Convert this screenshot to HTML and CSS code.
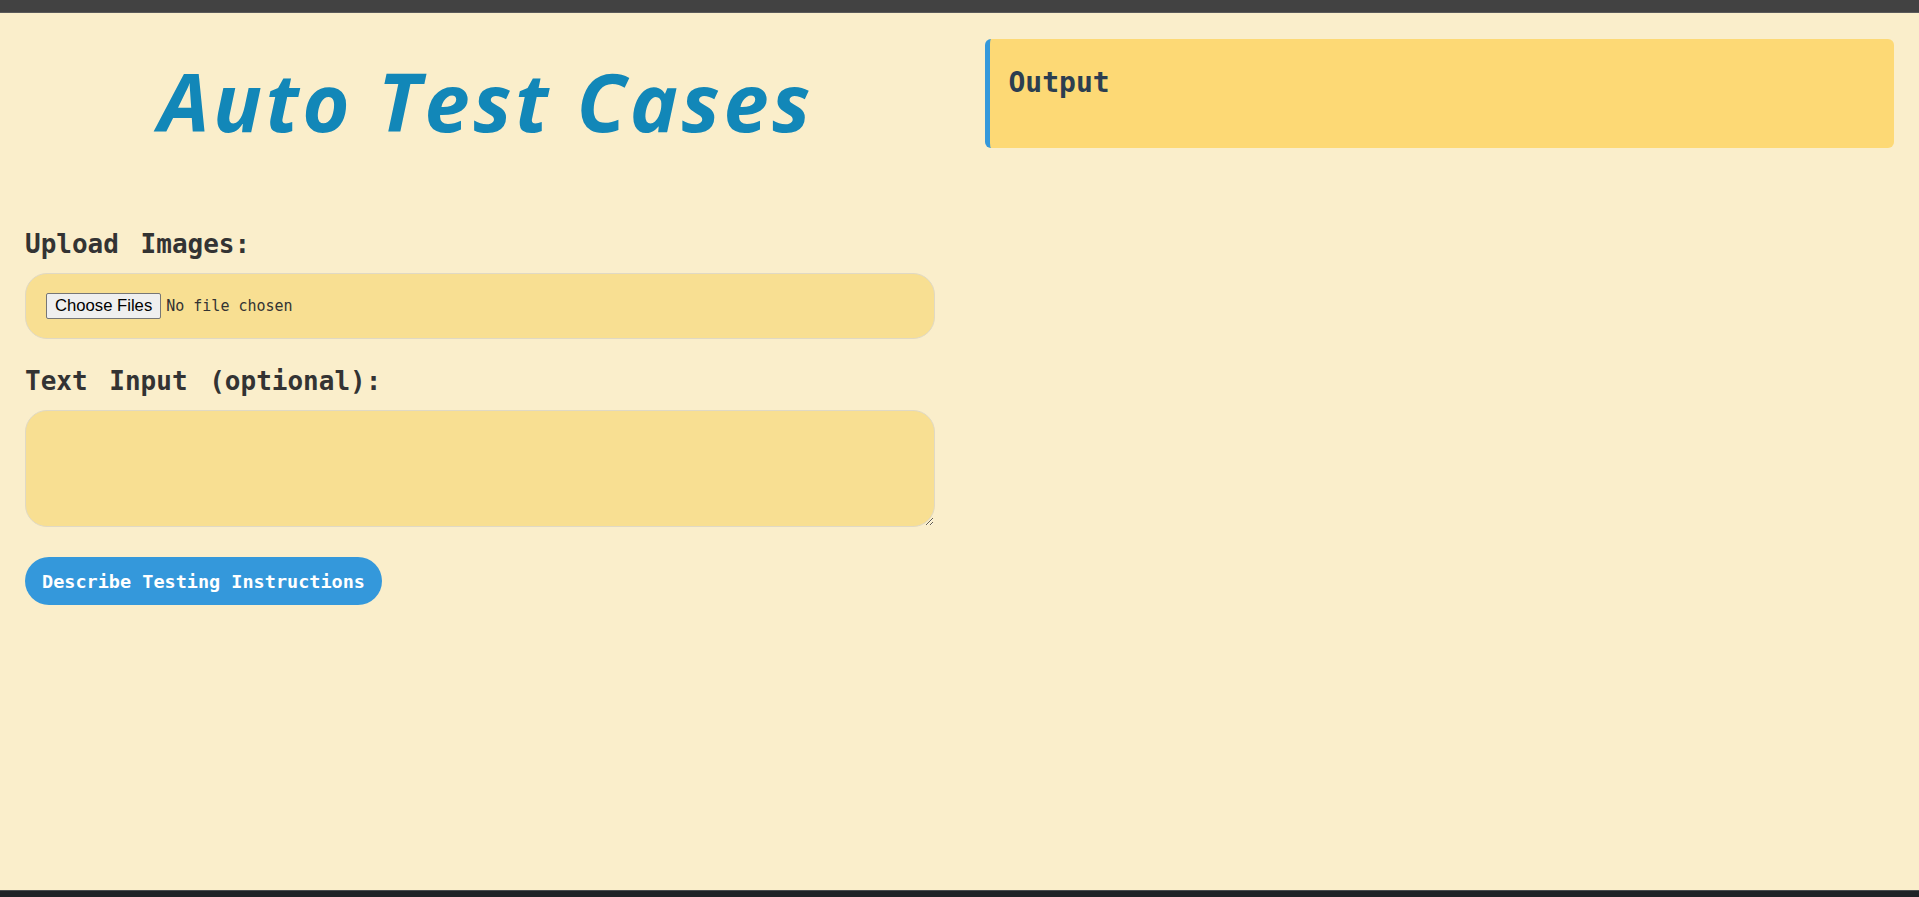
FILE: index.html
```html
<!DOCTYPE html>
<html lang="en">
<head>
<meta charset="utf-8">
<title>Auto Test Cases</title>
<link rel="stylesheet" href="styles.css">
</head>
<body>
<div class="topbar"></div>
<main class="page">
  <section class="col col-left">
    <h1 class="title">Auto Test Cases</h1>
    <form class="form">
      <label class="label" for="images">Upload Images:</label>
      <div class="filebox"><input class="file" id="images" type="file" multiple></div>
      <label class="label" for="text">Text Input (optional):</label>
      <textarea class="textarea" id="text"></textarea>
      <button class="btn" type="button">Describe Testing Instructions</button>
    </form>
  </section>
  <section class="col col-right">
    <div class="output">
      <h2 class="output-title">Output</h2>
    </div>
  </section>
</main>
<div class="bottombar"></div>
</body>
</html>
```

FILE: styles.css
```css
html, body {
  margin: 0;
  padding: 0;
}

body {
  height: 897px;
  display: flex;
  flex-direction: column;
  background: #faeecb;
  font-family: "DejaVu Sans Mono", monospace;
  color: #333;
  overflow: hidden;
}

.topbar {
  height: 12px;
  background: #424242;
  border-bottom: 1px solid #5a5a5a;
  flex: none;
}

.bottombar {
  height: 6px;
  background: #1f2327;
  border-top: 1px solid #4a4d4f;
  flex: none;
}

.page {
  flex: 1;
  display: grid;
  grid-template-columns: 1fr 1fr;
}

.col {
  padding: 25px;
  min-width: 0;
}

.title {
  margin: 15px 0 80px;
  padding-left: 13px;
  text-align: center;
  font-family: "Open Sans", sans-serif;
  font-style: italic;
  font-weight: 700;
  font-size: 81px;
  line-height: 96px;
  color: #1287b8;
  letter-spacing: 3.6px;
}

.form {
  display: flex;
  flex-direction: column;
  align-items: stretch;
}

.label {
  display: block;
  font-family: "DejaVu Sans Mono", monospace;
  font-weight: 700;
  font-size: 26px;
  line-height: 30px;
  word-spacing: 6px;
  color: #333;
  margin-bottom: 14px;
}

.filebox {
  background: #f8df92;
  border: 1px solid #e0d9c4;
  border-radius: 22px;
  padding: 19px 20px 19px 20px;
  margin-bottom: 27px;
}

.file {
  display: block;
  font-family: "DejaVu Sans Mono", monospace;
  font-size: 15px;
  color: #333;
  height: 26px;
  line-height: 26px;
}

.file::file-selector-button {
  font-family: "Liberation Sans", Arial, sans-serif;
  font-size: 16.67px;
  color: #000;
  background: #efefef;
  border: 1px solid #767676;
  border-radius: 2px;
  padding: 1px 8px;
  height: 26px;
  margin: 0 5px 0 0;
}

.textarea {
  display: block;
  box-sizing: border-box;
  width: 100%;
  height: 117px;
  background: #f8df92;
  border: 1px solid #e0d9c4;
  border-radius: 22px;
  padding: 12px 18px;
  font-family: "DejaVu Sans Mono", monospace;
  font-size: 16px;
  color: #333;
  margin: 0 0 30px;
}

.btn {
  align-self: flex-start;
  height: 48px;
  padding: 0 17px;
  border: none;
  border-radius: 24px;
  background: #3498db;
  color: #fff;
  font-family: "DejaVu Sans Mono", monospace;
  font-size: 18.5px;
  font-weight: 700;
  cursor: pointer;
}

.output {
  margin-top: 1px;
  background: #fdd975;
  border-left: 5px solid #3498db;
  border-radius: 6px;
  padding: 27px 19px 48px;
}

.output-title {
  margin: 0;
  font-family: "DejaVu Sans Mono", monospace;
  font-weight: 700;
  font-size: 28px;
  line-height: 34px;
  color: #2c3e50;
}
```
